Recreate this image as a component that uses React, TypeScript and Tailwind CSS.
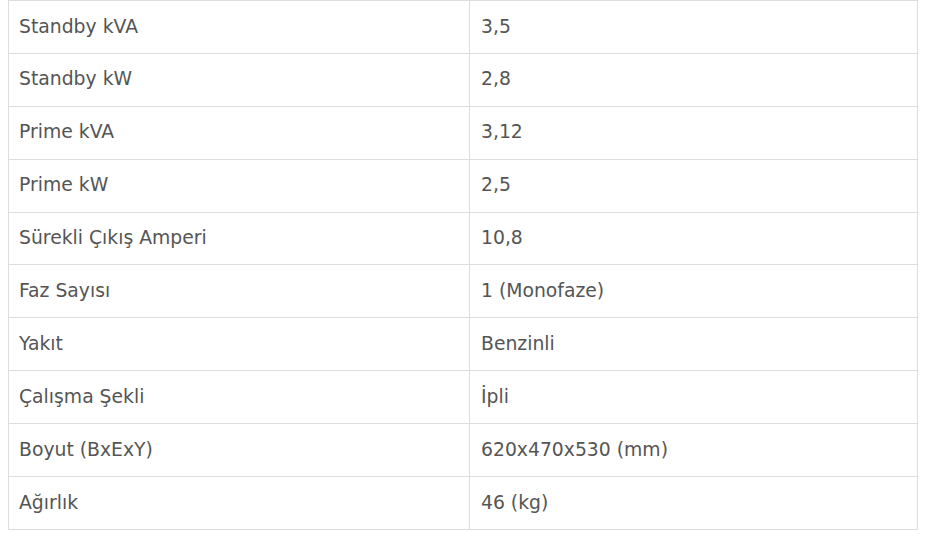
import React from 'react';

const rows: [string, string][] = [
  ['Standby kVA', '3,5'],
  ['Standby kW', '2,8'],
  ['Prime kVA', '3,12'],
  ['Prime kW', '2,5'],
  ['Sürekli Çıkış Amperi', '10,8'],
  ['Faz Sayısı', '1 (Monofaze)'],
  ['Yakıt', 'Benzinli'],
  ['Çalışma Şekli', 'İpli'],
  ['Boyut (BxExY)', '620x470x530 (mm)'],
  ['Ağırlık', '46 (kg)'],
];

const App = () => {
  return (
    <div className="bg-white w-[926px] h-[541px] px-2 font-['DejaVu_Sans',sans-serif] text-[#555555]">
      <table className="w-[910px] border-collapse text-[18.8px] leading-none">
        <tbody>
          {rows.map(([label, value]) => (
            <tr key={label} className="h-[52.9px]">
              <td className="w-[461px] border border-[#dddddd] px-[10px] align-middle">{label}</td>
              <td className="border border-[#dddddd] px-[11px] align-middle">{value}</td>
            </tr>
          ))}
        </tbody>
      </table>
    </div>
  );
};

export default App;
